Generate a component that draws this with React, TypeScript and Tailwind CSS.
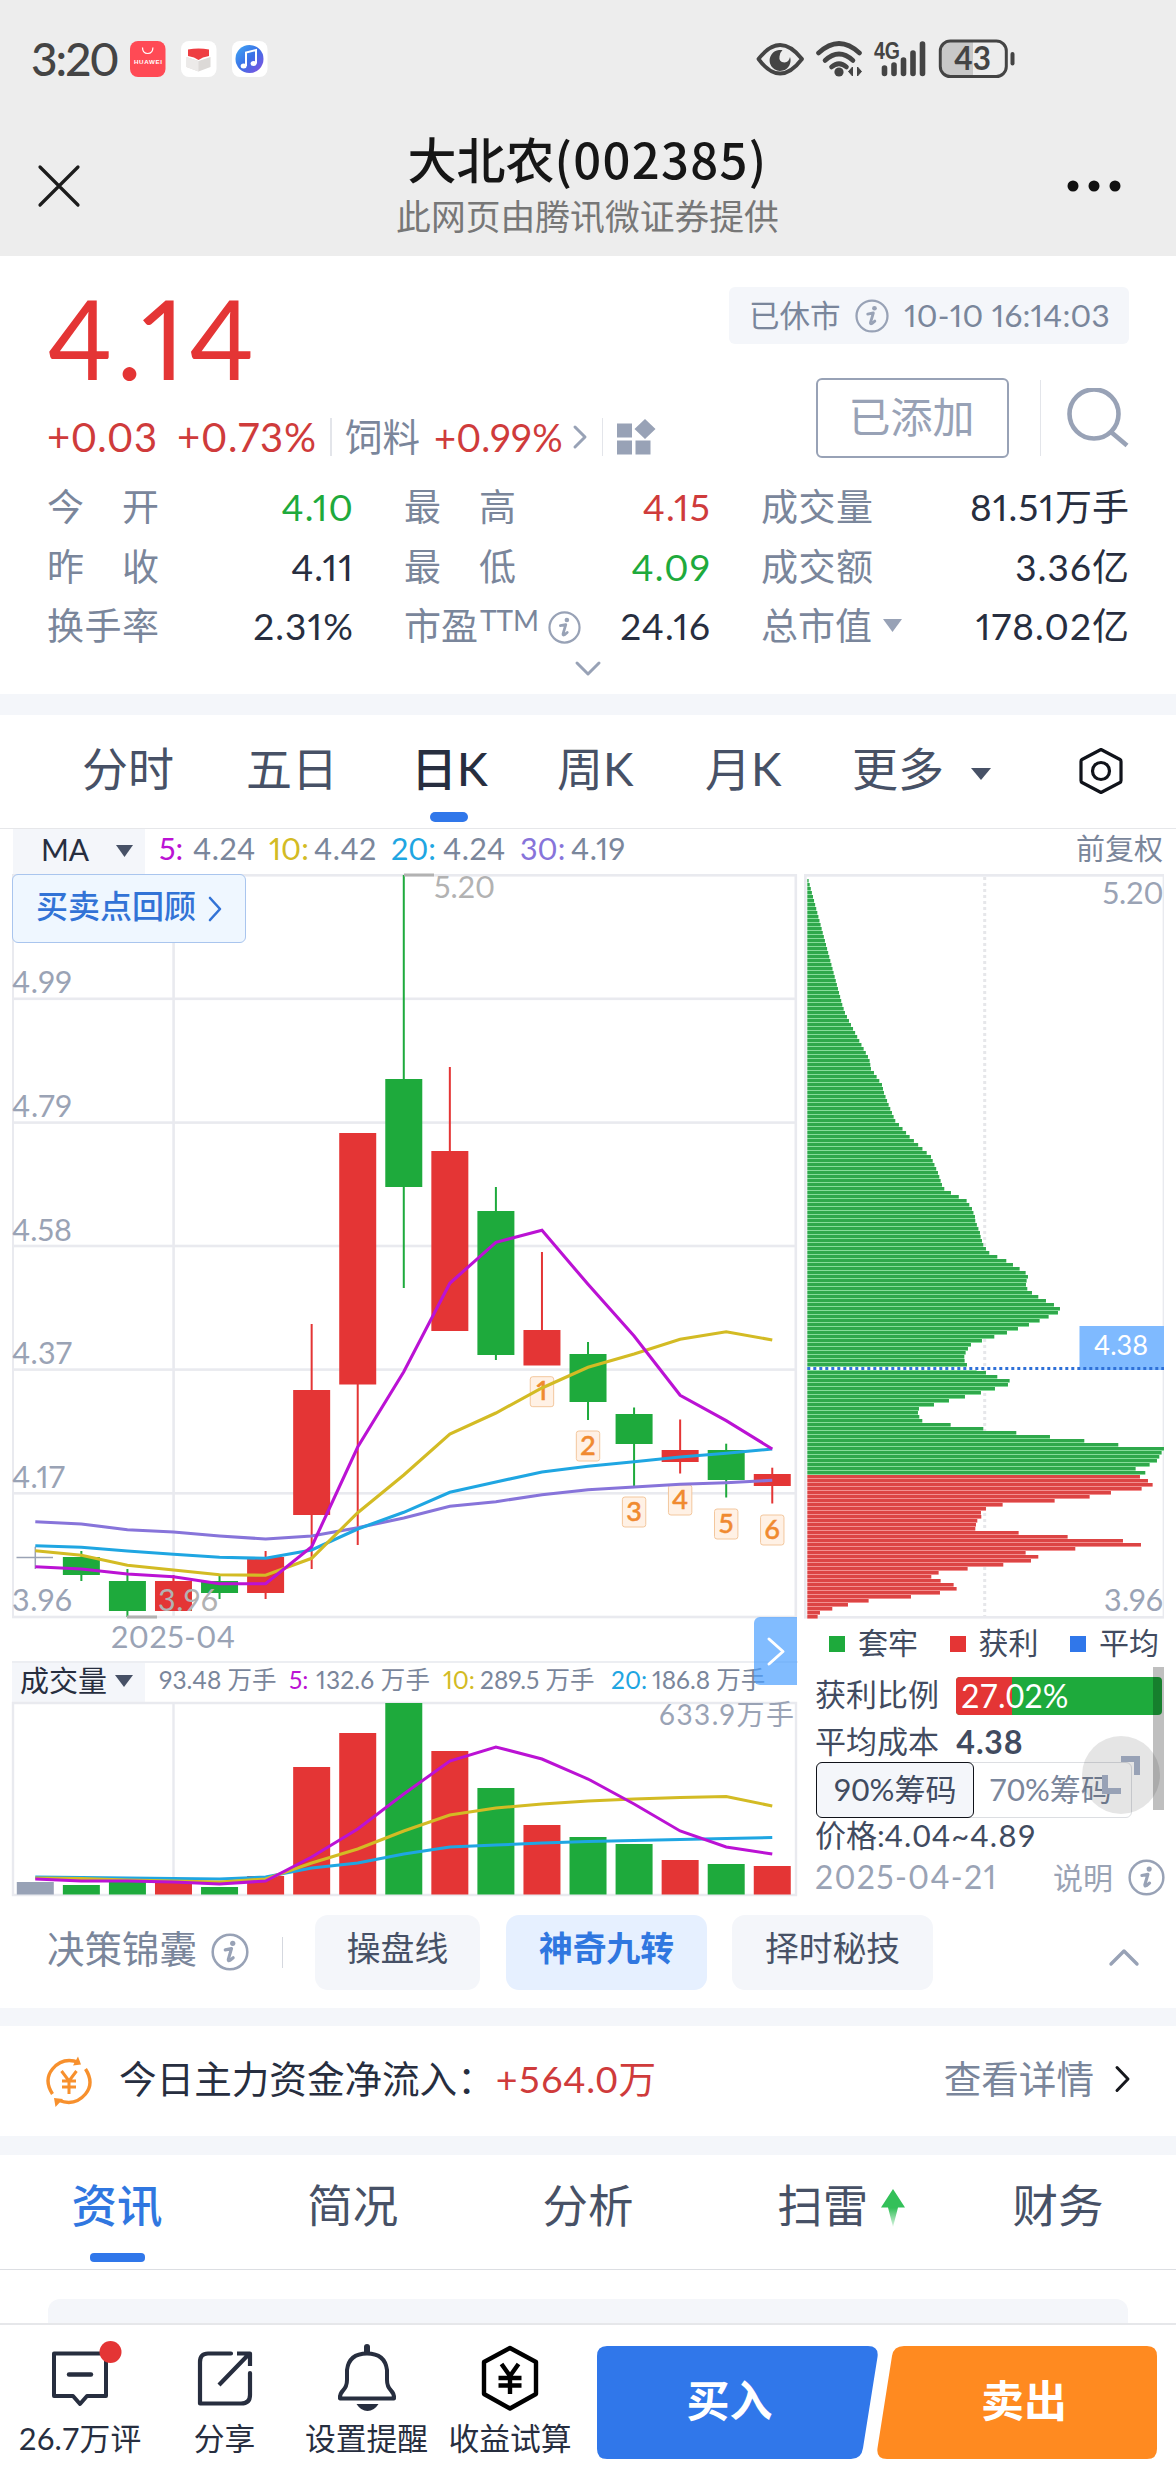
import React from "react";

const RED = "#e43535";
const GREEN = "#1eaa3c";
const INK = "#272e3f";
const GRID = "#e9eaef";
const MUTED = "#9aa3b5";

/* ---------- shared icons ---------- */

function InfoIcon({ size }: { size: number }) {
  return (
    <svg width={size} height={size} viewBox="0 0 36 36" className="shrink-0">
      <circle cx="18" cy="18" r="16.4" fill="none" stroke="#98a2b6" strokeWidth="2.4" />
      <circle cx="20.600" cy="9.800" r="2.500" fill="#98a2b6" />
      <path d="M13.500 16 L19.400 14.800 L16.400 25 Q16.200 26.800 17.800 26 L21 23.400" fill="none" stroke="#98a2b6" strokeWidth="3" strokeLinejoin="round" strokeLinecap="round" />
    </svg>
  );
}

function Triangle({ w, h, color }: { w: number; h: number; color: string }) {
  return (
    <svg width={w} height={h} viewBox="0 0 20 12" preserveAspectRatio="none" className="shrink-0">
      <path d="M0 0H20L10 12Z" fill={color} />
    </svg>
  );
}

function Chevron({ w, h, d, color, sw = 3 }: { w: number; h: number; d: string; color: string; sw?: number }) {
  return (
    <svg width={w} height={h} viewBox={`0 0 ${w} ${h}`} className="shrink-0 overflow-visible">
      <path d={d} fill="none" stroke={color} strokeWidth={sw} strokeLinecap="round" strokeLinejoin="round" />
    </svg>
  );
}

/* ---------- status bar + title ---------- */

function StatusBar() {
  return (
    <div className="flex h-[118px] items-center pl-[31px] pr-[161px]">
      <span className="w-[99px] text-[46px] tracking-[-2px] font-medium text-[#444]">3:20</span>
      <svg width="138" height="38" viewBox="130 40 138 38" className="shrink-0">
        <defs>
          <linearGradient id="music" x1="0" y1="0" x2="1" y2="1">
            <stop offset="0" stopColor="#3fa9f5" />
            <stop offset="0.5" stopColor="#3b6fe6" />
            <stop offset="1" stopColor="#8a4fe0" />
          </linearGradient>
        </defs>
        <rect x="130" y="41" width="35.500" height="36" rx="8" fill="#ff4a55" />
        <path d="M142.500 47.500q0 6 5.200 6t5.200-6" fill="none" stroke="#fff" strokeWidth="1.200" />
        <text x="134" y="64" fontSize="6.200" fontWeight="700" fill="#fff" textLength="28" fontFamily="Liberation Sans">HUAWEI</text>
        <rect x="181" y="41" width="35.500" height="36" rx="8" fill="#fff" />
        <path d="M186.500 57L198.500 61L210.500 57V67L198.500 71.500L186.500 67Z" fill="#dcd9d7" />
        <path d="M186.500 57L198.500 61V71.500L186.500 67Z" fill="#eceae9" />
        <path d="M188 49.500q10.500-2 21 0V56l-6 1.500-4.500 2.500-4.500-2.500-6-1.500Z" fill="#ee3d42" />
        <rect x="232" y="41" width="35.500" height="36" rx="8" fill="#fff" />
        <circle cx="249.500" cy="59" r="14" fill="url(#music)" />
        <path d="M246 66V52.500L256 50V63.500" fill="none" stroke="#fff" strokeWidth="2" />
        <ellipse cx="243.600" cy="66" rx="3" ry="2.500" fill="#fff" />
        <ellipse cx="253.600" cy="63.500" rx="3" ry="2.500" fill="#fff" />
      </svg>
      <svg width="260" height="42" viewBox="755 38 260 42" className="ml-auto shrink-0">
        <path d="M758.500 59Q780 31 802 59Q780 88 758.500 59Z" fill="none" stroke="#444" strokeWidth="3.800" strokeLinejoin="round" />
        <path d="M779 50a10.500 10.500 0 1 0 11 7q-1 5-5.500 5.500q-6-.5-5-6Q779.500 53 782.500 50Q780.500 49.800 779 50Z" fill="#444" />
        <g fill="none" stroke="#444" strokeWidth="4.600" strokeLinecap="round">
          <path d="M818.500 53Q839 34 859.500 53" />
          <path d="M825 60.500Q839 47.500 853 60.500" />
          <path d="M831.500 67Q839 60.500 846.500 67" />
        </g>
        <circle cx="839" cy="72" r="4.600" fill="#444" />
        <path d="M852.500 67V76L848.500 71.500ZM857.500 76V67L861.500 71.500Z" fill="#444" stroke="#444" />
        <text x="874" y="59" fontSize="23" fontWeight="700" fill="#444" textLength="26" lengthAdjust="spacingAndGlyphs" fontFamily="Liberation Sans">4G</text>
        <g stroke="#444" strokeWidth="5.600" strokeLinecap="round">
          <path d="M884.500 68V73.500M894 65V73.500M903.500 60V73.500M913 53V73.500M922.500 44V73.500" />
        </g>
        <path d="M951 42H973V76H951Q942 76 942 67V51Q942 42 951 42Z" fill="#c8c8c8" />
        <rect x="940.300" y="41" width="66" height="35.600" rx="10" fill="none" stroke="#444" strokeWidth="3" />
        <path d="M1012.500 54V63.500" stroke="#444" strokeWidth="4" strokeLinecap="round" />
        <text x="954" y="70" fontSize="32" fontWeight="700" fill="#444" textLength="37" lengthAdjust="spacingAndGlyphs" fontFamily="Lato">43</text>
      </svg>
    </div>
  );
}

function TitleBar() {
  return (
    <div className="flex h-[138px] items-center justify-between px-[38px]">
      <svg width="44" height="44" viewBox="0 0 44 44" className="ml-[-1px] mt-[-2px]">
        <path d="M3 3L41 41M41 3L3 41" stroke="#1c1c1c" strokeWidth="3.200" strokeLinecap="round" />
      </svg>
      <div className="ml-[28px] flex flex-col items-center">
        <div className="mt-[-4px] text-[49px] leading-[58px] font-medium text-[#161616] font-['Noto_Sans_CJK_SC',sans-serif]">
          大北农<span className="tracking-[1.300px]">(002385)</span>
        </div>
        <div className="mt-[6px] text-[34.800px] leading-[48px] text-[#777]">此网页由腾讯微证券提供</div>
      </div>
      <svg width="56" height="14" viewBox="0 0 56 14" className="mr-[16px] mt-[-2px]">
        <circle cx="7" cy="7" r="5.500" fill="#111" />
        <circle cx="28" cy="7" r="5.500" fill="#111" />
        <circle cx="49" cy="7" r="5.500" fill="#111" />
      </svg>
    </div>
  );
}

/* ---------- quote ---------- */

function Label({ children }: { children: string }) {
  return (
    <span className="flex w-[112px] justify-between text-[37px] text-[#7a869b]">
      {children.split("").map((c) => (
        <span key={c}>{c}</span>
      ))}
    </span>
  );
}

function Stat({ label, value, color, extra }: { label: string; value: string; color: string; extra?: React.ReactNode }) {
  const [, digits, unit] = value.match(/^([\d.%]+)(.*)$/) ?? ["", value, ""];
  return (
    <div className="flex h-[59.600px] items-center">
      {extra ? <span className="text-[37px] text-[#7a869b]">{label}</span> : <Label>{label}</Label>}
      {extra}
      <span className={`ml-auto text-[37px] ${color}`}>
        <span className="tracking-[1.100px]">{digits}</span>
        {unit}
      </span>
    </div>
  );
}

function Quote() {
  return (
    <section className="h-[438px] bg-white pl-[47px] pr-[47px] pt-[31px]">
      <div className="flex h-[127px] items-start justify-between">
        <div className="mt-[-4px] text-[110px] leading-[108px] tracking-[3.800px] text-[#e43535]">4.14</div>
        <div className="flex h-[57px] w-[400px] items-center justify-between rounded-[6px] bg-[#f4f6fa] pl-[20px] pr-[20px] text-[#7a869b]">
          <span className="text-[30.500px]">已休市</span>
          <InfoIcon size={34} />
          <span className="w-[205px] text-[31.500px] tracking-[0.250px]">10-10 16:14:03</span>
        </div>
      </div>
      <div className="mt-[-36px] flex h-[80px] items-center">
        <div className="flex items-center self-end pb-[1px] text-[40px] text-[#cf3b3b]">
          <span className="w-[130px] tracking-[0.600px]">+0.03</span>
          <span className="w-[153px] tracking-[0.900px]">+0.73%</span>
          <span className="h-[38px] w-[2px] bg-[#e3e5ea]" />
          <span className="ml-[13px] text-[37.500px] text-[#7a869b]">饲料</span>
          <span className="ml-[14px] w-[136px] text-[38px] tracking-[0.300px]">+0.99%</span>
          <Chevron w={18} h={26} d="M5 3L15 13L5 23" color="#98a2b6" />
          <span className="ml-[14px] h-[38px] w-[1px] bg-[#e3e5ea]" />
          <svg width="42" height="40" viewBox="0 0 42 40" className="ml-[13px]">
            <path d="M1 6.500h15v14H1zM1 23.500h15v14H1zM19.500 23.500h15v14h-15zM29 2L39.500 12L29 22L18.500 12Z" fill="#98a2b6" />
          </svg>
        </div>
        <div className="ml-auto flex h-[80px] w-[193px] items-center justify-center rounded-[6px] border-2 border-[#98a2b6] pb-[3px] pr-[2px] text-[42px] text-[#98a2b6]">已添加</div>
        <span className="ml-[31px] h-[76px] w-[1px] bg-[#e3e5ea]" />
        <svg width="64" height="60" viewBox="0 0 64 60" className="ml-[25px] mr-[-1px]">
          <circle cx="28" cy="26" r="24.500" fill="none" stroke="#98a2b6" strokeWidth="4.600" />
          <path d="M45 44L61 57.500" stroke="#98a2b6" strokeWidth="4.600" />
        </svg>
      </div>
      <div className="mt-[19px] grid grid-cols-[307px_307px_368px] gap-x-[50px]">
        <Stat label="今开" value="4.10" color="text-[#1eaa3c]" />
        <Stat label="最高" value="4.15" color="text-[#cf3b3b]" />
        <Stat label="成交量" value="81.51万手" color="text-[#272e3f]" />
        <Stat label="昨收" value="4.11" color="text-[#272e3f]" />
        <Stat label="最低" value="4.09" color="text-[#1eaa3c]" />
        <Stat label="成交额" value="3.36亿" color="text-[#272e3f]" />
        <Stat label="换手率" value="2.31%" color="text-[#272e3f]" />
        <Stat
          label="市盈"
          value="24.16"
          color="text-[#272e3f]"
          extra={
            <>
              <span className="mt-[-12px] w-[70px] pl-[2px] text-[28px] text-[#7a869b]">TTM</span>
              <span className="mt-[3px]"><InfoIcon size={33} /></span>
            </>
          }
        />
        <Stat label="总市值" value="178.02亿" color="text-[#272e3f]" extra={<span className="ml-[11px]"><Triangle w={19} h={13} color="#98a2b6" /></span>} />
      </div>
      <div className="mt-[5px] flex justify-center">
        <Chevron w={26} h={16} d="M2 2L13 13L24 2" color="#98a2b6" />
      </div>
    </section>
  );
}

/* ---------- period tabs ---------- */

function PeriodTabs() {
  return (
    <div className="flex h-[114px] items-center border-b border-[#e6e7ea] bg-white pb-[5px] pl-[82px] text-[46px] text-[#475166]">
      <span className="w-[164px]">分时</span>
      <span className="w-[165px]">五日</span>
      <span className="relative w-[146px] font-medium text-[#272e3f]">
        日K
        <span className="absolute left-[19px] top-[66px] h-[10px] w-[38px] rounded-full bg-[#3077ea]" />
      </span>
      <span className="w-[148px]">周K</span>
      <span className="w-[147px]">月K</span>
      <span className="w-[119px]">更多</span>
      <span className="mt-[10px]"><Triangle w={20} h={12} color="#475166" /></span>
      <svg width="44" height="48" viewBox="0 0 44 48" className="ml-[88px] mt-[3px]">
        <path d="M22 2.500L41 12.500Q42 13 42 14.500V33.500Q42 35 41 35.500L22 45.500L3 35.500Q2 35 2 33.500V14.500Q2 13 3 12.500Z" fill="none" stroke="#10131a" strokeWidth="3.200" strokeLinejoin="round" />
        <circle cx="22" cy="24" r="8.500" fill="none" stroke="#10131a" strokeWidth="3.200" />
      </svg>
    </div>
  );
}

/* ---------- candle chart ---------- */

const cx = (i: number) => 35.3 + 46.06 * i;

// [body top, body bottom, wick top, wick bottom, rising]
const candles: [number, number, number, number, boolean][] = [
  [1557, 1575, 1551, 1581, false],
  [1581, 1611, 1569, 1617, false],
  [1581, 1611, 1575, 1611, true],
  [1581, 1593, 1575, 1599, false],
  [1557, 1593, 1551, 1599, true],
  [1390, 1515, 1324, 1569, true],
  [1133, 1384.5, 1133, 1545, true],
  [1079, 1187, 875, 1288, false],
  [1151, 1331, 1067, 1331, true],
  [1211, 1355, 1187, 1360, false],
  [1330, 1365.5, 1252, 1365, true],
  [1354, 1402, 1342, 1420, false],
  [1414, 1444, 1407.5, 1486, false],
  [1450, 1462, 1419.5, 1473.5, true],
  [1450, 1480, 1443.7, 1497.5, false],
  [1474, 1486, 1467.7, 1503.5, true],
];

const ma: [string, number[]][] = [
  ["#bb12d4", [1566.7, 1569, 1574, 1576.7, 1583.7, 1583.7, 1546.7, 1447, 1371.7, 1283.3, 1242.3, 1230.3, 1284.3, 1336, 1395.3, 1420.7, 1449]],
  ["#d3bb24", [1550.7, 1555.3, 1565.3, 1570, 1574.7, 1575.3, 1558.3, 1512.7, 1475, 1434, 1413, 1388, 1367.3, 1354, 1339.3, 1331.7, 1340]],
  ["#1fa6e2", [1545.7, 1547.3, 1551, 1554.3, 1557.3, 1558.3, 1550, 1529, 1512.3, 1492.3, 1482, 1472, 1466.3, 1461.7, 1457, 1453.3, 1449]],
  ["#8774da", [1521.7, 1524, 1529.7, 1532, 1536, 1539, 1536, 1527.7, 1518, 1506.3, 1501.7, 1494.7, 1489.7, 1487, 1484.3, 1482.7, 1480.3]],
];

const marks: [number, number][] = [[11, 1376.7], [12, 1431], [13, 1497], [14, 1485], [15, 1509], [16, 1515]];

const line = (ys: number[]) => ys.map((y, i) => `${cx(i)},${y}`).join(" ");

function CandleChart() {
  return (
    <svg width="786" height="787" viewBox="12 874 786 787" className="block overflow-visible font-['Lato']">
      <g fill={GRID}>
        {[874, 997.5, 1121.3, 1244.700, 1368.3, 1492, 1615.700].map((y) => (
          <rect key={y} x="12" y={y} width="785" height="2.600" />
        ))}
        <rect x="12" y="874" width="2" height="743" />
        <rect x="172.300" y="874" width="2.600" height="743" />
        <rect x="794.500" y="874" width="2.600" height="743" />
      </g>
      <path d={`M16.500 1557.500H53M${cx(0)} 1546.700V1569`} stroke="#9aa3b5" strokeWidth="1.500" />
      {candles.map(([t, b, wt, wb, up], k) => {
        const c = up ? RED : GREEN;
        return (
          <g key={k} fill={c}>
            <rect x={cx(k + 1) - 1} y={wt} width="2" height={wb - wt} />
            <rect x={cx(k + 1) - 18.5} y={t} width="37" height={b - t} />
          </g>
        );
      })}
      {marks.map(([i, y], k) => (
        <g key={i}>
          <rect x={cx(i) - 11.7} y={y} width="23.400" height="30" rx="2.500" fill="#fff1e5" stroke="#f3c79d" />
          <text x={cx(i)} y={y + 23.5} fontSize="27" fontWeight="500" textAnchor="middle" fill="#f08a30" stroke="#f08a30" strokeWidth="0.500">{k + 1}</text>
        </g>
      ))}
      {[...ma].reverse().map(([c, ys]) => (
        <polyline key={c} points={line(ys)} fill="none" stroke={c} strokeWidth="3.100" />
      ))}
      <g fontSize="30.500" fill={MUTED}>
        {[["4.99", 993], ["4.79", 1116.5], ["4.58", 1240.5], ["4.37", 1364], ["4.17", 1488], ["3.96", 1611]].map(([t, y]) => (
          <text key={t} x="12" y={y} textLength={t === "4.17" ? 53 : 60}>{t}</text>
        ))}
        <text x="111" y="1648" textLength="124">2025-04</text>
      </g>
      <g fill="#b2b2b2" fontSize="30.500">
        <rect x="404" y="873.500" width="30" height="3" />
        <text x="434" y="898" textLength="61">5.20</text>
        <rect x="127" y="1615.500" width="30" height="3" />
        <text x="158" y="1611" textLength="60">3.96</text>
      </g>
    </svg>
  );
}

/* ---------- volume chart ---------- */

const volumes: [number, string][] = [
  [1882, "#98a2b6"], [1885, GREEN], [1882, GREEN], [1883, RED], [1887, GREEN], [1876, RED], [1767, RED], [1733, RED], [1703, GREEN],
  [1751, RED], [1788, GREEN], [1825, RED], [1837, GREEN], [1844, GREEN], [1860, RED], [1864, GREEN], [1866, RED],
];

const volMa: [string, number[]][] = [
  ["#1fa6e2", [1877, 1877.5, 1878, 1878.5, 1879, 1877, 1868, 1863, 1854, 1847, 1845, 1843, 1841.5, 1840.5, 1839.5, 1838.5, 1837.5]],
  ["#d3bb24", [1878, 1878.5, 1880, 1881, 1882, 1879, 1863, 1849, 1831, 1815, 1808, 1804, 1801, 1799, 1797.5, 1796.5, 1806]],
  ["#bb12d4", [1879, 1881, 1881, 1882, 1884, 1881, 1857, 1829, 1794, 1761, 1747, 1759, 1779, 1804, 1831, 1847, 1854]],
];

function VolumeChart() {
  return (
    <svg width="786" height="194" viewBox="12 1702 786 194" className="block overflow-visible font-['Lato','Noto_Sans_CJK_SC',sans-serif]">
      <path d="M13 1703H796V1895H13Z" fill="none" stroke={GRID} strokeWidth="2.400" />
      <path d="M173.500 1703V1895" stroke={GRID} strokeWidth="2.400" />
      {volumes.map(([y, c], i) => (
        <rect key={i} x={cx(i) - 18.5} y={y} width="37" height={1894.5 - y} fill={c} />
      ))}
      {volMa.map(([c, ys]) => (
        <polyline key={c} points={line(ys)} fill="none" stroke={c} strokeWidth="3" />
      ))}
      <text x="659" y="1725" fontSize="28" fill={MUTED} textLength="135">633.9万手</text>
    </svg>
  );
}

/* ---------- chip distribution ---------- */

// Sparse [bar index, right edge] anchors; values between anchors are interpolated.
const upper: [number, number][] = [
  [0, 56], [31, 157], [33, 165], [36, 183], [40, 208], [44, 234], [45, 239], [47, 243], [48, 252], [51, 276], [53, 282], [56, 296], [60, 316],
  [61, 327], [64, 359], [69, 423], [73, 444], [76, 456], [77, 463], [78, 483], [80, 530], [82, 546], [84, 555], [85, 556], [88, 570],
];
const lower = [
  572, 576, 580, 588, 598, 622, 649, 669, 689, 707, 714, 710, 708, 712, 726, 745, 768, 792, 810, 804, 776, 749, 717, 684, 651, 613, 576, 543, 534,
  527, 523, 524, 531, 560, 588, 622, 659, 654, 615, 573, 525, 477, 432, 387, 384, 388, 397, 482, 580, 679, 780, 883, 985, 1122, 1115, 1108,
  1101, 1079, 1037, 1066, 1050, 1074, 1088, 1055, 963, 899, 794, 638, 588, 573, 574, 562, 558, 556, 686, 833, 999, 1053, 856, 707, 745, 723,
  640, 533, 446, 424, 452, 491, 500, 450, 363, 236, 174, 127, 90, 83,
];

function chipEdge(i: number): number {
  if (i > 88) return lower[i - 89];
  const k = upper.findIndex(([n], j) => j > 0 && n >= i);
  const [a, va] = upper[k - 1];
  const [b, vb] = upper[k];
  return va + ((vb - va) * (i - a)) / (b - a);
}

function ChipChart() {
  const bars = Array.from({ length: 185 }, (_, i) => ({ y: 879 + i * 4, w: Math.max(0, (chipEdge(i) - 52) / 3), up: i >= 149 }));
  return (
    <svg width="361" height="746" viewBox="804 874 361 746" className="block font-['Lato']">
      <rect x="804" y="874" width="360" height="2.700" fill={GRID} />
      <rect x="804" y="874" width="2.600" height="743" fill={GRID} />
      <rect x="1162.600" y="874" width="1.400" height="743" fill={GRID} />
      <rect x="804" y="1616" width="360" height="2.600" fill={GRID} />
      <path d="M984.700 877V1616" stroke="#e6e7ea" strokeWidth="3" strokeDasharray="3 3" />
      {bars.map(({ y, w, up }) => (
        <g key={y}>
          <rect x="807.300" y={y} width={w} height="3" fill={up ? "#dc4444" : "#2fa84b"} />
          <rect x="807.300" y={y + 3} width={w} height="1" fill={up ? "#f29090" : "#86dc9a"} />
        </g>
      ))}
      <rect x="1079.500" y="1326" width="84.500" height="43" fill="#7fbaff" />
      <text x="1094" y="1354.500" fontSize="27" fill="#fff" textLength="54">4.38</text>
      <path d="M807.300 1368.400H1164" stroke="#fff" strokeWidth="3" />
      <path d="M1079.500 1368.400H1164" stroke="#7fbaff" strokeWidth="3" />
      <path d="M807.300 1368.400H1164" stroke="#2f71d8" strokeWidth="3" strokeDasharray="3 3" />
      <g fill={MUTED} fontSize="30.500">
        <text x="1102.500" y="904" textLength="61">5.20</text>
        <text x="1104" y="1611" textLength="59">3.96</text>
      </g>
    </svg>
  );
}

function ChipPanel() {
  return (
    <div className="relative h-[276px] w-[361px] text-[31px] text-[#414b60]">
      <div className="flex h-[44px] items-center justify-between pb-[1px] pl-[25px] pr-[6px] text-[30px]">
        {([["套牢", "bg-[#1eaa3c]"], ["获利", "bg-[#e43535]"], ["平均", "bg-[#3077ea]"]] as const).map(([t, c]) => (
          <span key={t} className="flex items-center">
            <i className={`mr-[13px] mt-[5px] size-[16px] ${c}`} />
            {t}
          </span>
        ))}
      </div>
      <div className="flex h-[62px] items-center pl-[11px] pt-[2px]">
        <span className="mt-[-4px]">获利比例</span>
        <span className="relative ml-[17px] flex h-[38px] w-[206px] items-center overflow-hidden rounded-[4px] bg-[#1eaa3c] pl-[5px] text-[32px] text-white">
          <span className="absolute left-0 top-0 h-full w-[56px] bg-[#e43535]" />
          <span className="relative tabular-nums">27.02%</span>
        </span>
      </div>
      <div className="flex h-[34px] items-center pb-[3px] pl-[11px]">
        平均成本<b className="ml-[17px] text-[32px] tracking-[0.800px]">4.38</b>
      </div>
      <div className="ml-[12px] mt-[2px] flex h-[56px] w-[316px] rounded-[6px] border border-[#dcdee2]">
        <span className="-m-px flex w-[158px] items-center justify-center rounded-[6px] border border-[#10131a] bg-[#f4f6fa] pb-[2px] tabular-nums">90%筹码</span>
        <span className="ml-[16px] flex items-center pb-[2px] tabular-nums text-[#7a869b]">70%筹码</span>
      </div>
      <div className="flex h-[36px] items-center pb-[2px] pl-[11px]">价格:<span className="tabular-nums tracking-[1.300px]">4.04~4.89</span></div>
      <div className="flex h-[50px] items-center pb-[5px] pl-[11px] text-[32px] text-[#9aa3b5]">
        <span className="tracking-[1.300px]">2025-04-21</span>
        <span className="ml-auto mr-[15px] text-[30px]">说明</span>
        <span className="mt-[2px]"><InfoIcon size={37} /></span>
      </div>
      <span className="absolute left-[349px] top-[47px] h-[143px] w-[11px] bg-black/25" />
      <span className="absolute left-[278px] top-[116px] size-[78px] rounded-full bg-black/10">
        <svg width="78" height="78" viewBox="0 0 78 78">
          <path d="M39 23H55V39M23 39V55H39" fill="none" stroke="#98a2b6" strokeWidth="6" />
        </svg>
      </span>
    </div>
  );
}

function ChartArea() {
  return (
    <section className="relative flex h-[1067px] justify-between bg-white pl-[12px] pr-[11px]">
      <div className="relative w-[786px]">
        <div className="flex h-[45px] items-start text-[30.500px] text-[#7a869b]">
          <div className="ml-[1px] flex h-[45px] w-[132px] items-center justify-between bg-[#f4f6fa] pl-[28px] pr-[12px] pb-[6px] text-[30px] text-[#272e3f]">
            MA
            <span className="mt-[5px]"><Triangle w={17} h={12} color="#475166" /></span>
          </div>
          <div className="flex h-[39px] items-center pl-[14px]">
            <span className="w-[34px] text-[#bb12d4]">5:</span>
            <span className="w-[76px] tracking-[0.500px]">4.24</span>
            <span className="w-[45px] text-[#d3bb24]">10:</span>
            <span className="w-[77px] tracking-[0.500px]">4.42</span>
            <span className="w-[52px] text-[#1fa6e2]">20:</span>
            <span className="w-[77px] tracking-[0.500px]">4.24</span>
            <span className="w-[51px] text-[#8774da]">30:</span>
            <span className="tracking-[0.500px]">4.19</span>
          </div>
        </div>
        <CandleChart />
        <div className="flex h-[41px] items-center border-t-2 border-[#eceef2] text-[26px] text-[#7a869b]">
          <div className="flex h-full w-[133px] items-center justify-between bg-[#f4f6fa] pb-[4px] pl-[8px] pr-[12px] text-[29px] text-[#272e3f]">
            成交量
            <Triangle w={18} h={12} color="#475166" />
          </div>
          <div className="flex items-center pb-[4px] pl-[14px] text-[24.500px]">
            <span className="w-[130px]">93.48 万手</span>
            <span className="w-[27px] text-[#bb12d4]">5:</span>
            <span className="w-[127px] tracking-[0.200px]">132.6 万手</span>
            <span className="w-[37px] text-[#d3bb24]">10:</span>
            <span className="w-[131px]">289.5 万手</span>
            <span className="w-[41px] text-[#1fa6e2]">20:</span>
            <span>186.8 万手</span>
          </div>
        </div>
        <VolumeChart />
        <div className="absolute left-0 top-[45px] flex h-[69px] w-[234px] items-center rounded-[6px] border border-[#a9c5ee] bg-[#eff7ff] pl-[23px] pb-[6px] text-[32px] font-medium text-[#3273d6]">
          买卖点回顾
          <span className="ml-[12px] mt-[6px]"><Chevron w={14} h={24} d="M2 1L12 12L2 23" color="#3273d6" sw={2.6} /></span>
        </div>
        <div className="absolute left-[742px] top-[788px] flex h-[68px] w-[43px] items-center justify-center rounded-l-[6px] bg-[#4c9fff]/70">
          <Chevron w={16} h={27} d="M1 1L15 13.500L1 26" color="#fff" />
        </div>
      </div>
      <div className="w-[361px]">
        <div className="flex h-[45px] items-center justify-end pb-[6px] pr-[2px] text-[29px] text-[#7a869b]">前复权</div>
        <ChipChart />
        <ChipPanel />
      </div>
    </section>
  );
}

/* ---------- lower sections ---------- */

function StrategyRow() {
  return (
    <div className="flex h-[112px] items-center bg-white pl-[47px] pr-[37px] text-[33.800px] text-[#475166]">
      <span className="mt-[-6px] text-[37.500px] text-[#7a869b]">决策锦囊</span>
      <span className="ml-[14px]"><InfoIcon size={38} /></span>
      <span className="ml-[33px] h-[31px] w-[1px] bg-[#d5d8df]" />
      <span className="ml-[32px] flex h-[75px] w-[165px] items-center justify-center rounded-[13px] bg-[#f4f6fa] pb-[6px]">操盘线</span>
      <span className="ml-[26px] flex h-[75px] w-[201px] items-center justify-center rounded-[13px] bg-[#e6f0ff] pb-[6px] font-bold text-[#3077e0]">神奇九转</span>
      <span className="ml-[25px] flex h-[75px] w-[201px] items-center justify-center rounded-[13px] bg-[#f4f6fa] pb-[6px]">择时秘技</span>
      <span className="ml-auto mt-[9px]"><Chevron w={30} h={18} d="M2 16L15 3L28 16" color="#98a2b6" sw={3.4} /></span>
    </div>
  );
}

function FundsRow() {
  return (
    <div className="flex h-[110px] items-center bg-white pl-[45px] pr-[46px] pb-[4px] text-[37.600px] text-[#272e3f]">
      <svg width="48" height="52" viewBox="0 0 48 52" className="mt-[6px] shrink-0">
        <g fill="none" stroke="#f7902d" strokeWidth="3.400">
          <path d="M7.500 38Q-1.500 24 7.500 13Q18 0.500 34 6.500" />
          <path d="M40.500 13Q49.500 27 40.500 38Q30 50.500 14 44.500" />
          <path d="M16.500 15L24 25L31.500 15M24 25V38M17 25H31M17 31H31" strokeWidth="3" />
        </g>
        <path d="M33 0.500L36 8.500L28 9.500ZM9 42L18 43L10.500 51Z" fill="#f7902d" />
      </svg>
      <span className="ml-[26px]">今日主力资金净流入：</span>
      <span className="ml-[1px] tabular-nums tracking-[0.800px] text-[#cf3b3b]">+564.0万</span>
      <span className="ml-auto text-[#7a869b]">查看详情</span>
      <span className="ml-[20px]"><Chevron w={16} h={26} d="M3 1.500L14 13L3 24.500" color="#16181d" /></span>
    </div>
  );
}

function NewsTabs() {
  return (
    <div className="grid h-[115px] grid-cols-5 border-b border-[#dcdee2] bg-white text-[45.500px] text-[#475166]">
      <span className="relative flex h-[102px] items-center justify-center pr-[1px] font-medium text-[#3077e0]">
        资讯
        <span className="absolute left-[90px] top-[98px] h-[9px] w-[55px] rounded-[4px] bg-[#3077ea]" />
      </span>
      <span className="flex h-[102px] items-center justify-center">简况</span>
      <span className="flex h-[102px] items-center justify-center">分析</span>
      <span className="relative flex h-[102px] items-center justify-center pr-[1px]">
        扫雷
        <svg width="26" height="40" viewBox="0 0 26 40" className="absolute left-[174px] top-[33px]">
          <defs>
            <linearGradient id="up" x1="0" y1="0" x2="0" y2="1">
              <stop offset="0.500" stopColor="#33c059" />
              <stop offset="1" stopColor="#33c059" stopOpacity="0.150" />
            </linearGradient>
          </defs>
          <path d="M13 1L25 19.500H18L13 39L8 19.500H1Z" fill="url(#up)" />
        </svg>
      </span>
      <span className="flex h-[102px] items-center justify-center pr-[1px]">财务</span>
    </div>
  );
}

function BottomItem({ label, w, children }: { label: string; w: string; children: React.ReactNode }) {
  return (
    <div className={`flex flex-col items-center ${w}`}>
      <svg width="64" height="70" viewBox="0 0 64 70" className="overflow-visible">{children}</svg>
      <span className="mt-[11px] whitespace-nowrap text-[30.800px] leading-[32px] tabular-nums text-[#272e3f]">{label}</span>
    </div>
  );
}

function BottomBar() {
  return (
    <div className="flex h-[157px] border-t-2 border-[#e6e7ea] bg-white pt-[17px]">
      <BottomItem label="26.7万评" w="w-[160px]">
        <path d="M6 11.500H58V54H39L32 62L25 54H6Z" fill="none" stroke={INK} strokeWidth="4" strokeLinejoin="round" />
        <path d="M21 32.500H43" stroke={INK} strokeWidth="4.400" strokeLinecap="round" />
        <circle cx="62.500" cy="10" r="11" fill={RED} />
      </BottomItem>
      <BottomItem label="分享" w="w-[129px]">
        <path d="M38 11.500H15Q7 11.500 7 20V61.500H48Q57 61.500 57 53V31" fill="none" stroke={INK} strokeWidth="4.200" strokeLinecap="round" strokeLinejoin="round" />
        <path d="M26 43L56 12M44 11.500H57V24" fill="none" stroke={INK} strokeWidth="4.200" strokeLinejoin="round" />
      </BottomItem>
      <BottomItem label="设置提醒" w="w-[155px]">
        <path d="M32 5V10" stroke={INK} strokeWidth="6" strokeLinecap="round" />
        <path d="M5 56.500Q4.500 52 8 48.500Q12 44.500 12 38V28Q14 11.500 32 11.500Q50 11.500 52 28V38Q52 44.500 56 48.500Q59.500 52 59 56.500Z" fill="none" stroke={INK} strokeWidth="4" strokeLinejoin="round" />
        <path d="M21.500 62H43.500Q39 69 32.500 69Q26 69 21.500 62Z" fill={INK} />
      </BottomItem>
      <BottomItem label="收益试算" w="w-[132px]">
        <path d="M32 6L58 20V52L32 66.500L6 52V20Z" fill="none" stroke="#000" strokeWidth="4.400" strokeLinejoin="round" />
        <path d="M23.500 22L32 34L40.500 22M32 34V52M20.500 36H43.500M20.500 43.500H43.500" fill="none" stroke="#000" strokeWidth="4.400" />
      </BottomItem>
      <div className="relative ml-[21px] mt-[4px] flex h-[113px] w-[560px] text-[43px] font-bold text-white">
        <svg width="560" height="113" viewBox="0 0 560 113" className="absolute left-0 top-0">
          <path d="M10 0H271Q282 0 280.500 11L266 102Q264.500 113 254 113H10Q0 113 0 103V10Q0 0 10 0Z" fill="#3077ea" />
          <path d="M307 0H550Q560 0 560 10V103Q560 113 550 113H290Q279 113 280.500 102L295 10Q296.500 0 307 0Z" fill="#ff8a20" />
        </svg>
        <span className="relative flex w-[265px] items-center justify-center pb-[4px]">买入</span>
        <span className="relative flex flex-1 items-center justify-center pb-[4px] pl-[29px]">卖出</span>
      </div>
    </div>
  );
}

export default function App() {
  return (
    <main className="h-[2480px] w-[1176px] overflow-hidden whitespace-nowrap bg-[#f4f6fa] leading-none proportional-nums font-['Lato','Noto_Sans_CJK_SC',sans-serif]">
      <header className="h-[256px] bg-[#ededed]">
        <StatusBar />
        <TitleBar />
      </header>
      <Quote />
      <div className="h-[21px]" />
      <PeriodTabs />
      <ChartArea />
      <StrategyRow />
      <div className="h-[18px]" />
      <FundsRow />
      <div className="h-[19px]" />
      <NewsTabs />
      <div className="h-[53px] bg-white px-[48px] pt-[29px]">
        <div className="h-full rounded-t-[12px] bg-[#f4f6fa]" />
      </div>
      <BottomBar />
    </main>
  );
}
